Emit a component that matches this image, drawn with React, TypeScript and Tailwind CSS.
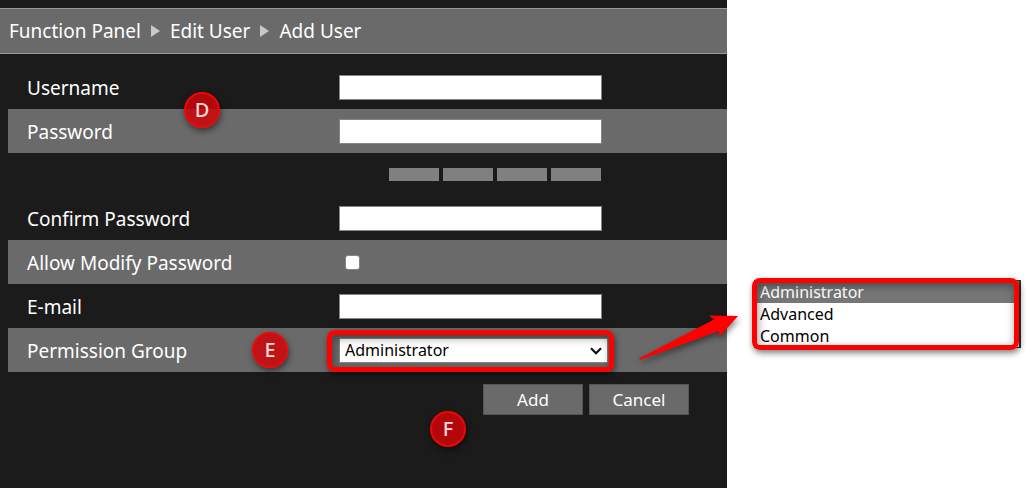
import React, { useState } from 'react';
import { clsx } from 'clsx';

const crumbs = ['Function Panel', 'Edit User', 'Add User'];
const groups = ['Administrator', 'Advanced', 'Common'];

const inputClass = 'h-[25px] w-[263px] border border-[#858585] bg-white px-1 text-base text-black outline-none';

const Marker = ({ letter, className }: { letter: string; className: string }) => (
  <span
    className={clsx(
      'absolute z-10 flex size-9 items-center justify-center rounded-full border-2 border-[#ee0505] bg-[#cd0508]/85 text-xl leading-none font-medium text-[#fadadb] shadow-[1px_3px_6px_rgba(0,0,0,0.5)]',
      className
    )}
  >
    {letter}
  </span>
);

const Highlight = ({ className }: { className: string }) => (
  <span
    className={clsx(
      'pointer-events-none absolute rounded-lg border-[5px] border-[#ff0000] shadow-[1px_3px_6px_rgba(0,0,0,0.5),inset_1px_3px_8px_rgba(0,0,0,0.4)]',
      className
    )}
  />
);

type RowProps = {
  label: string;
  htmlFor: string;
  shaded?: boolean;
  children: React.ReactNode;
};

const Row = ({ label, htmlFor, shaded, children }: RowProps) => (
  <div className={clsx('relative flex h-11 items-center pl-[19px]', shaded && 'bg-[#6a6a6a]')}>
    <label htmlFor={htmlFor} className="w-[312px] shrink-0 pt-px text-[19px] leading-6">
      {label}
    </label>
    {children}
  </div>
);

const App = () => {
  const [group, setGroup] = useState('Administrator');

  return (
    <div className='flex min-h-screen bg-white font-["Noto_Sans",sans-serif]'>
      <main className="min-w-0 flex-1 bg-[#1b1b1b] pt-2 text-white">
        <nav className="flex h-[46px] items-center gap-[10px] border-y border-[#9a9a9a] bg-[#6a6a6a] px-[9px] text-[19px] leading-6">
          {crumbs.map((crumb, index) => (
            <React.Fragment key={crumb}>
              {index > 0 && (
                <svg width="9" height="12" viewBox="0 0 9 12" className="shrink-0">
                  <path d="M0 0L9 6L0 12Z" fill="#c8c8c8" />
                </svg>
              )}
              <a href="#" className="whitespace-nowrap">{crumb}</a>
            </React.Fragment>
          ))}
        </nav>

        <form className="pt-[11px] pl-2" onSubmit={(e) => e.preventDefault()}>
          <Row label="Username" htmlFor="username">
            <input id="username" type="text" className={inputClass} />
            <Marker letter="D" className="top-[27px] left-[176px]" />
          </Row>
          <Row label="Password" htmlFor="password" shaded>
            <input id="password" type="password" className={inputClass} />
          </Row>

          {/* Password strength */}
          <div className="flex h-[43px] items-center gap-1 pl-[381px]">
            {[1, 2, 3, 4].map((level) => (
              <span key={level} className="h-[13px] w-[50px] bg-[#808080]" />
            ))}
          </div>

          <Row label="Confirm Password" htmlFor="confirm">
            <input id="confirm" type="password" className={inputClass} />
          </Row>
          <Row label="Allow Modify Password" htmlFor="allow-modify" shaded>
            <input
              id="allow-modify"
              type="checkbox"
              className="ml-[6px] size-[15px] appearance-none rounded-[3px] border border-[#858585] bg-white checked:bg-blue-600"
            />
          </Row>
          <Row label="E-mail" htmlFor="email">
            <input id="email" type="email" className={inputClass} />
          </Row>
          <Row label="Permission Group" htmlFor="group" shaded>
            <div className="relative">
              <select
                id="group"
                value={group}
                onChange={(e) => setGroup(e.target.value)}
                className="block h-[25px] w-[269px] appearance-none border border-[#858585] bg-white pl-[5px] text-base leading-5 text-black outline-none"
              >
                {groups.map((name) => (
                  <option key={name}>{name}</option>
                ))}
              </select>
              <svg width="12" height="8" viewBox="0 0 12 8" className="pointer-events-none absolute top-[9px] right-[6px]">
                <path d="M1 1.2L6 6.2L11 1.2" fill="none" stroke="#111" strokeWidth="2.2" />
              </svg>
              <Highlight className="-top-2 -right-[6px] -bottom-[9px] -left-3" />
            </div>
            <Marker letter="E" className="top-1 left-[244px]" />
            <svg
              width="110"
              height="60"
              viewBox="0 0 110 60"
              className="absolute -top-[18px] -right-[18px] z-10 drop-shadow-[1px_3px_3px_rgba(0,0,0,0.5)]"
            >
              <path d="M4 48.5L79 9.5L74 5.5L103 6L84 27V21L5 50Z" fill="#ff0000" />
            </svg>
          </Row>

          <div className="relative flex justify-end gap-[6px] pt-3 pr-[38px]">
            <button type="submit" className="h-[31px] w-[100px] border border-[#555] bg-[#6a6a6a] text-[17px] leading-6">
              Add
            </button>
            <button type="button" className="h-[31px] w-[100px] border border-[#555] bg-[#6a6a6a] text-[17px] leading-6">
              Cancel
            </button>
            <Marker letter="F" className="top-[39px] left-[422px]" />
          </div>
        </form>
      </main>

      <aside className="w-[299px] shrink-0 pt-[280px] pr-[5px] pl-[27px]">
        <div className="relative">
          <ul className="border-y border-r-2 border-[#333] bg-white" role="listbox" aria-label="Permission Group">
            {groups.map((name) => (
              <li key={name} role="option" aria-selected={name === group}>
                <button
                  type="button"
                  onClick={() => setGroup(name)}
                  className={clsx(
                    'block h-[22px] w-full pl-[6px] text-left text-base leading-[22px]',
                    name === group ? 'bg-[#767676] text-white' : 'text-black'
                  )}
                >
                  {name}
                </button>
              </li>
            ))}
          </ul>
          <Highlight className="-top-[2px] right-[2px] -bottom-[2px] -left-[2px]" />
        </div>
      </aside>
    </div>
  );
};

export default App;
